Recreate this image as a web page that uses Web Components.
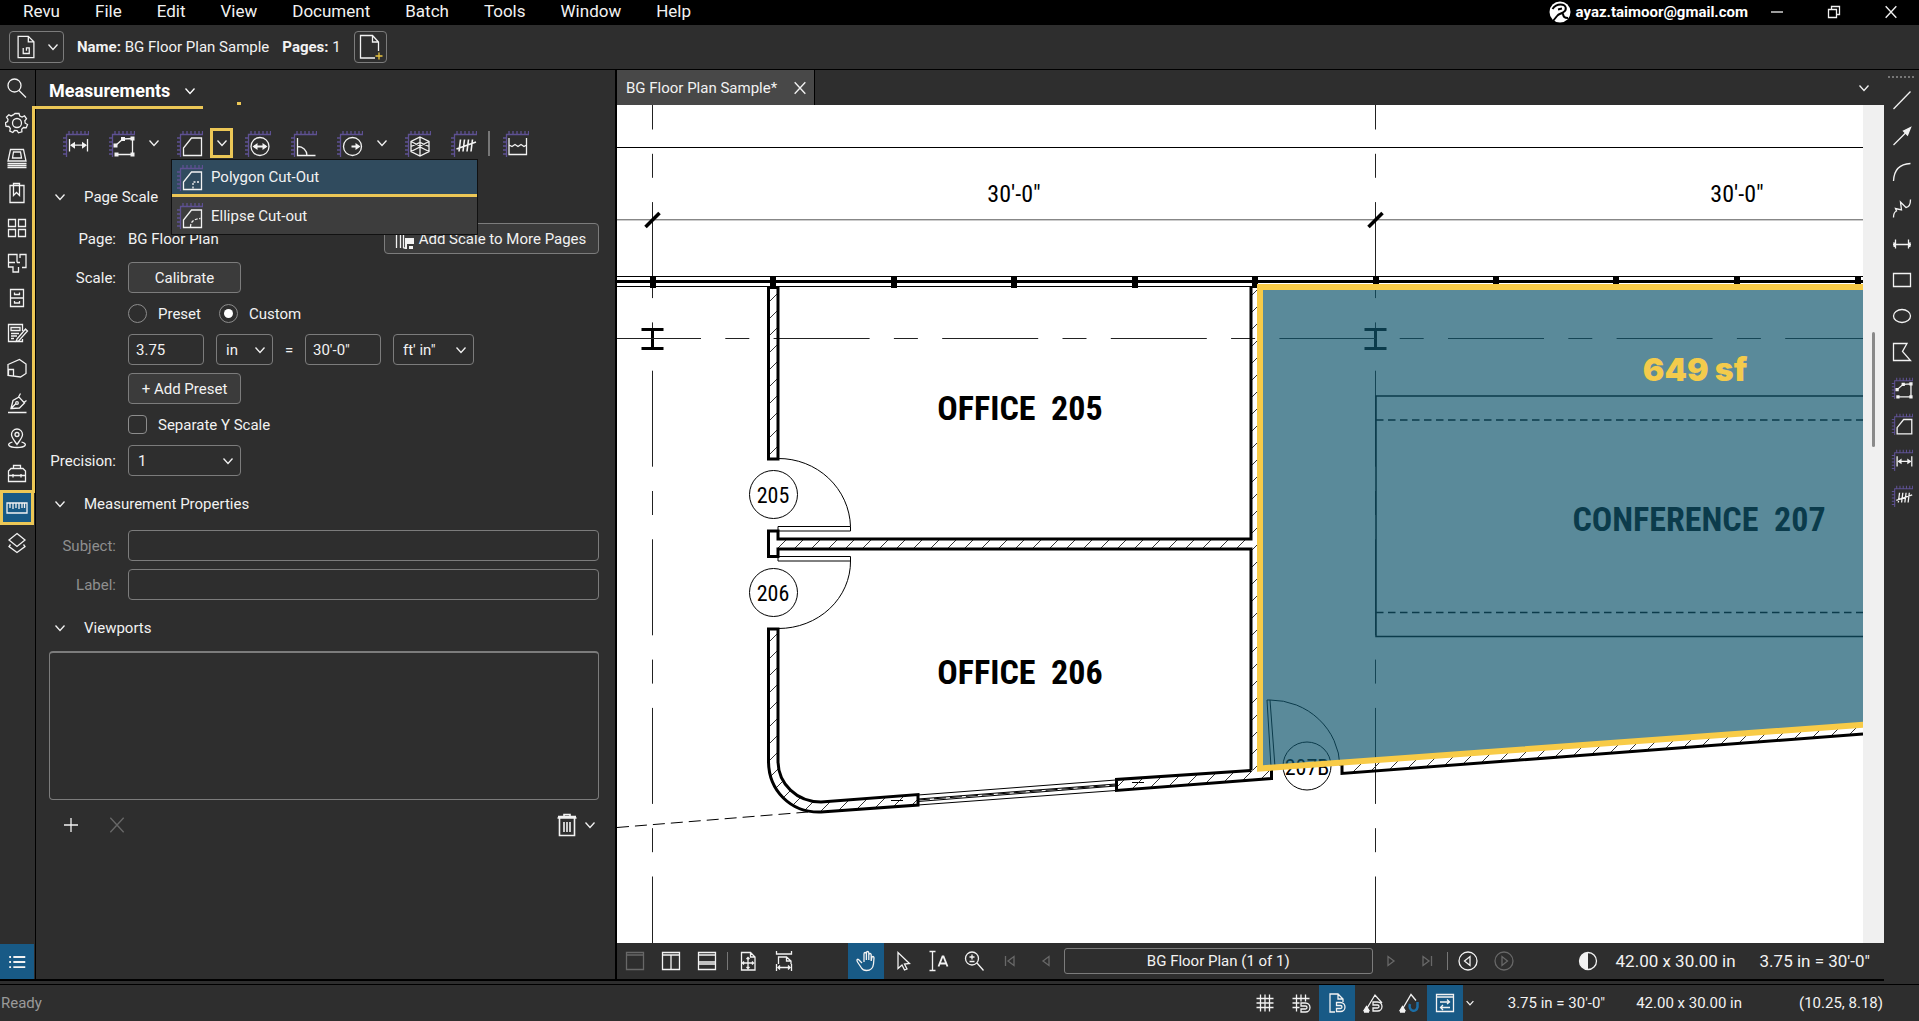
<!DOCTYPE html>
<html lang="en">
<head>
<meta charset="utf-8">
<title>BG Floor Plan Sample</title>
<style>
  html, body {
    height: 100%;
    margin: 0;
  }

  body {
    background: #2e2e2e;
    color: #f2f2f2;
    font: 15px/20px Roboto, "Liberation Sans", sans-serif;
    overflow: hidden;
    --line: #000;
    --edge: #7c7c7c;
    --accent: #185a86;
    --mark: #ecc756;
  }
</style>
</head>
<body>
<plan-app></plan-app>

<script>
const RULER = '<path stroke="#5e5192" stroke-width="1.3" d="M4.5 27V4.5H27M4.5 8H1M4.5 12H1M4.5 16H1M4.5 20H1M4.5 24H1M7 4.5V1M11 4.5V1M15 4.5V1M19 4.5V1M23 4.5V1M26.500 4.500V1"/>';

// name: [viewBox size, markup]
const ICONS = {
  chevron: [16, '<path d="M3.500 5.500L8 10.500L12.500 5.500"/>'],
  search: [24, '<circle cx="9.500" cy="9.500" r="6.500"/><path d="M14 14.500L21 21.500"/>'],
  gear: [24, '<circle cx="12" cy="12" r="4.500"/><path d="M10 2.500h4l.8 2.600 2.300 1 2.400-1.300 2 3-1.700 2 .4 2.400 2.300 1.300-1.300 3.200-2.700-.2-1.800 1.700.2 2.600-3.400 1-1.500-2.200-2.500-.1-1.700 2-3-1.400.5-2.700-1.500-1.900-2.700-.2-.8-3.400 2.300-1.300.4-2.300-1.500-2.200 2.300-2.400 2.300 1.200 2.100-1z"/>'],
  stack: [24, '<path d="M5.500 3.500h13l2.500 11.500H3zM8.500 6h7l1 6h-9zM2.500 17.500h19M2.500 19.500h19M2.500 21.500h19"/>'],
  bookmark: [24, '<path d="M5 4.500h14v17H5zM8.500 2.500h6v12l-3-3-3 3z"/>'],
  tiles: [24, '<path d="M3.500 3.500h7v7h-7zM13.500 3.500h7v7h-7zM3.500 13.500h7v7h-7zM13.500 13.500h7v7h-7z"/>'],
  spaces: [24, '<path d="M12 7.500V3.500H3.500v12.500H8v5h5.500V16M3.500 11.500h6.500M12 7.500v4M12 11.500h3M15 7V3.500h6v13h-4"/>'],
  cabinet: [24, '<path d="M5.500 3.500h13v17h-13zM5.500 12h13M9.500 6.500v2h5v-2M9.500 15v2h5v-2"/>'],
  form: [24, '<path d="M17.500 10V3.500h-14v17h14V18M6 6.500h9v3H6zM6 12.500h8M6 15h6M6 17.500h3M12 18l8.500-10 2 2-8.500 9.500-3 1z"/>'],
  tag: [24, '<path d="M3 8.500L14.500 3.500L21 8v9.500L15.500 21L3 19.500zM3.500 19.500V13.500H8.500V20"/>'],
  pen: [24, '<path d="M3 21.500h18.500M6 17.500l2-8 6-3.500 5.500 6-5 5-8 .5zM6 17.500l5-5M13.500 6l2-3.500M19 11.500l2.500-2"/><circle cx="12" cy="12" r="1.300"/>'],
  pin: [24, '<path d="M12 18.500c-3-4.500-5.500-7-5.500-10a5.500 5.500 0 0 1 11 0c0 3-2.500 5.500-5.500 10z"/><circle cx="12" cy="8.500" r="2"/><path d="M7.500 16c-7 2-4 5.500 4.500 5.500s11.500-3.500 4.500-5.500"/>'],
  toolbox: [24, '<path d="M3.500 14.500V10L6 7.500h12L20.500 10v4.500zM3.500 14.500v6h17v-6M8.500 7.500v-3h7v3M8 13v3.500M16 13v3.500"/>'],
  ruler: [24, '<path d="M2 7h20v10H2zM5 7v5M8 7v6M11 7v5M14 7v6M17 7v5M19.500 7v5"/>'],
  layers: [24, '<path d="M12 2.500L20 9L12 15.500L4 9zM5.500 13.500L4 15.500L12 21.500L20 15.500L18.500 13.500"/>'],
  list: [24, '<path stroke-width="2" d="M3.500 6.500h2M8 6.500h13M3.500 12h2M8 12h13M3.500 17.500h2M8 17.500h13"/>'],

  length: [27, RULER + '<path d="M7.500 9v12.500M25.500 9v12.500M9 15.200h15"/><path fill="currentColor" stroke="none" d="M8 15.200l5-3.500v7zM25 15.200l-5-3.500v7z"/>'],
  area: [27, RULER + '<path d="M7.500 15.500L15 9L24.500 8.500V24.500H8.500"/><path fill="currentColor" stroke="none" d="M5.500 13.500h4v4h-4zM13 7h4v4h-4zM22.500 6.500h4v4h-4zM22.500 22.500h4v4h-4zM6.500 22.500h4v4h-4z"/>'],
  polygon: [27, RULER + '<path d="M7.500 25.500V18L15.500 8H25.500V25.500z"/>'],
  diameter: [27, RULER + '<circle cx="16" cy="16.500" r="9"/><path stroke-width="2" d="M10 16.500h12"/><path fill="currentColor" stroke="none" d="M8.500 16.500l5-3.500v7zM23.500 16.500l-5-3.500v7z"/>'],
  angle: [27, RULER + '<path d="M7.500 8V25.500H25.500M7.500 16.500a9 9 0 0 1 9.500 9"/>'],
  radius: [27, RULER + '<circle cx="16.500" cy="16.500" r="9"/><path stroke-width="2" d="M15.500 16.500h6"/><path fill="currentColor" stroke="none" d="M24.500 16.500l-5-3.500v7z"/>'],
  volume: [27, RULER + '<path d="M16 7l9 4.500v10L16 26l-9-4.500v-10zM7 11.500L16 16l9-4.500M16 7v19M7 16.500l9-4 9 4M7 21.500l9-4.500 9 4.500"/>'],
  count: [27, RULER + '<path stroke-width="1.600" d="M10.500 9.500l-1.500 12M14.500 9.500l-1.500 12M18.500 9.500l-1.500 12M22.500 9.500l-1.500 12M6.500 19L26 12"/>'],
  depth: [27, RULER + '<path d="M7 8V24.500H24.500V8M7 15l3 1.500 3-2 3 2 3-2 3 2 2.500-1.500"/>'],
  cutPolygon: [27, RULER + '<path d="M7.500 25.500V18L15.500 8H25.500V25.500z"/><path stroke-dasharray="2 1.500" d="M17 24.500v-6.500h7"/>'],
  cutEllipse: [27, RULER + '<path d="M7.500 25.500V18L15.500 8H25.500V25.500z"/><path stroke-dasharray="3 1.500" d="M14.500 25c0-5 3-8 10-8.500"/>'],

  pageScale: [22, '<path d="M2.500 3v17M6.500 3v17M9.500 20V3M9.500 20h2"/><path fill="currentColor" stroke="none" d="M11 10h9v6h-7v5h-2zM15 18h4v3h-4z"/>'],
  docMenu: [28, '<path d="M5.500 2.500h11l6 6v17h-17zM16.500 2.500v6h6M11 15v6h6.500v-6h-3v3"/>'],
  newPage: [28, '<path d="M19 25H4.500V2.500h12l6 6.500v9M16.500 2.500V9h6"/><path stroke="#e9c440" d="M23 19.500v7M19.500 23h7"/>'],
  plus: [18, '<path d="M9 2v14M2 9h14"/>'],
  cross: [18, '<path d="M3 2.500l12 13M15 2.500L3 15.500"/>'],
  trash: [26, '<path stroke-width="1.600" d="M3.500 6h19M5.500 6.500v17h15v-17M10 5V2.500h6V5M10 10v10M13 10v10M16 10v10M4 4.500h18"/>'],

  pane1: [22, '<path d="M2.500 2.500h17v17h-17zM2.500 5h17"/>'],
  pane2: [22, '<path d="M2.500 2.500h17v17h-17zM2.500 5h17M11 5v14.500"/>'],
  pane3: [22, '<path d="M2.500 2.500h17v17h-17zM2.500 5h17M2.500 12h17M2.500 14h17"/>'],
  fitPage: [22, '<path d="M4.500 2.500h9l4.500 4.500v13H4.500zM13.500 2.500V7H18M11 7.500v11M5.500 13h11M9.500 9L11 7.500 12.500 9M9.500 17l1.500 1.500 1.500-1.500M7 11.500L5.500 13 7 14.500M15 11.500l1.500 1.500-1.500 1.500"/>'],
  fitWidth: [22, '<path d="M3.500 1v3h15V1M5.500 14V7h8l4.500 4v3M13.500 7v4H18M3.500 14v7M18.500 14v7M5 17.500h12M7 15.500l-2 2 2 2M15 15.500l2 2-2 2"/>'],
  hand: [22, '<path d="M7 13L3.500 9.500C2 8.500 1.500 10.500 2.500 12l4 6c1 1.800 2.500 2.500 5 2.500 4.500 0 6.500-2.500 7-6.500l.5-6c0-2-2-2-2.300 0l-.5 3V5c0-2-2.200-2-2.400 0v5-7c0-2-2.300-2-2.400 0v7-6c0-2-2.400-2-2.400 0v8"/>'],
  pointer: [22, '<path d="M7 2.500v16l4-3.500 2.500 5 2.500-1-2.500-5 5-.5z"/>'],
  textSelect: [22, '<path d="M2.500 1.500h6M5.500 1.500v19M2.500 20.500h6"/><path stroke-width="1.800" d="M11.500 16.500l4-10h1l4 10M13 13.500h6"/>'],
  zoom: [22, '<circle cx="9" cy="8.500" r="6.500"/><path d="M14 13l6.500 7.500M9 4.500v5M6.500 7h5M6.500 11.500h5"/>'],
  first: [22, '<path d="M6.500 6v10M15 6.500v9L9 11z"/>'],
  prev: [22, '<path d="M14 6.500v9L8 11z"/>'],
  next: [22, '<path d="M8 6.500v9l6-4.500z"/>'],
  last: [22, '<path d="M15.500 6v10M7 6.500v9l6-4.500z"/>'],
  back: [22, '<circle cx="11" cy="11" r="9"/><path d="M13 6.500v9L7.500 11z"/>'],
  forward: [22, '<circle cx="11" cy="11" r="9"/><path d="M9 6.500v9l5.500-4.500z"/>'],
  contrast: [22, '<circle cx="11" cy="11" r="8.500"/><path fill="currentColor" stroke="none" d="M11 2.500a8.500 8.500 0 0 0 0 17z"/>'],

  grid: [22, '<path d="M6.500 2.500v17M11 2.500v17M15.500 2.500v17M2.500 6.500h17M2.500 11h17M2.500 15.500h17"/>'],
  snapGrid: [22, '<path d="M6.500 2.500v17M11 2.500v7M15.500 2.500v7M2.500 6.500h17M2.500 11h7M2.500 15.500h7M11 11h4.500a4.500 4.500 0 0 1 0 9H11v-3h4.500a1.500 1.500 0 0 0 0-3H11z"/>'],
  snapDoc: [22, '<path d="M9 20H4V2h8l5 5v3M12 2v5h5M10.500 10.500h4a4.500 4.500 0 0 1 0 9h-4v-3h4a1.500 1.500 0 0 0 0-3h-4z"/>'],
  snapMark: [22, '<path d="M4.500 17L13 3l7 8M11 10h4.500a4.500 4.500 0 0 1 0 9H11v-3h4.500a1.500 1.500 0 0 0 0-3H11z"/><path fill="currentColor" d="M4.500 14.500l2.500 4H2zM2 20h5"/>'],
  reuse: [22, '<path d="M4.500 17L13 2.500l5 6"/><path fill="currentColor" d="M4.500 14.500l2.500 4H2zM2 20h5"/><path stroke="#1c6ea6" stroke-width="2.500" d="M12 12c-2.500 7 6.500 9.500 7.500 3V10"/>'],
  sync: [22, '<path d="M2.500 2.500h17v17h-17zM2.500 5h17M6 10h9.500M13 7.500l2.500 2.500L13 12M16 15.500H6.500M9 13l-2.500 2.500L9 18"/>'],

  line: [22, '<path d="M2.500 20L19.500 2.500"/>'],
  arrow: [22, '<path d="M2.500 20L16 6.500"/><path fill="currentColor" d="M12.500 6L19.500 2.500L16.500 10z"/>'],
  arc: [22, '<path d="M2.500 20C3 8 9 3 19.500 2.500"/>'],
  squiggle: [22, '<path d="M2.500 20.500c0-4 .5-5.500 3-6.500l-1-2.500 6 1.500-1-8 5.500 5.500c3.500-.5 4.500-3.500 4.500-8"/>'],
  dimension: [22, '<path d="M4.500 6.500v9M17.500 6.500v9M2 11.500h18M2.500 9.500l2 2-2 2M19.500 9.500l-2 2 2 2"/>'],
  square: [22, '<path d="M2.500 4.500h17v13h-17z"/>'],
  ellipse: [22, '<ellipse cx="11" cy="11" rx="8.500" ry="6.500"/>'],
  flag: [22, '<path d="M2.500 2.500H16L11.500 10.500L19.500 19.500H2.500z"/>'],

  minimize: [18, '<path d="M3 9h12"/>'],
  restore: [18, '<path d="M3.500 6.500h8v8h-8zM6.500 6.500v-3h8v8h-3"/>'],
  logo: [24, '<circle cx="12" cy="12" r="10.500" fill="#fff" stroke="none"/><path stroke="#000" stroke-width="2" d="M4.500 9c2-3 4.500-4.500 8-4.500 6 0 7 5.500 2.500 8-2.500 1.300-4.500 1.500-6 3.500l-4 5M15 13.500c0 3 2 4.500 5 4.500M10 9.500l4-1"/>'],
};

class UiIcon extends HTMLElement {
  connectedCallback() {
    const [box, body] = ICONS[this.getAttribute('name')];
    const size = this.getAttribute('size') || box;
    this.attachShadow({ mode: 'open' });
    this.shadowRoot.innerHTML = `
      <style>
        :host {
          display: inline-flex;
          flex: none;
        }
        svg {
          display: block;
          fill: none;
          stroke: currentColor;
          stroke-width: ${(1.3 * box / size).toFixed(1)};
        }
      </style>
      <svg width="${size}" height="${size}" viewBox="0 0 ${box} ${box}" aria-hidden="true">${body}</svg>
    `;
  }
}

customElements.define('ui-icon', UiIcon);

// Flat icon button used in every bar
class IconButton extends HTMLElement {
  connectedCallback() {
    const name = this.getAttribute('icon');
    const size = this.getAttribute('size') || 22;
    const label = this.getAttribute('label') || name;
    this.attachShadow({ mode: 'open' });
    this.shadowRoot.innerHTML = `
      <style>
        :host {
          display: flex;
          flex: none;
        }
        button {
          display: flex;
          align-items: center;
          justify-content: center;
          width: 100%;
          margin: 0;
          padding: 0;
          border: 0;
          background: none;
          color: inherit;
        }
        :host([active]) button {
          background: var(--accent);
        }
        :host([dim]) button {
          color: #686868;
        }
        :host([marked]) button {
          border: 3px solid var(--mark);
        }
      </style>
      <button aria-label="${label}"><ui-icon name="${name}" size="${size}"></ui-icon></button>
    `;
  }
}

customElements.define('icon-button', IconButton);

class TitleBar extends HTMLElement {
  connectedCallback() {
    const menus = ['Revu', 'File', 'Edit', 'View', 'Document', 'Batch', 'Tools', 'Window', 'Help'];
    this.attachShadow({ mode: 'open' });
    this.shadowRoot.innerHTML = `
      <style>
        :host {
          display: flex;
          align-items: stretch;
          box-sizing: border-box;
          height: 25px;
          padding: 0 0 2px 6px;
          background: #000;
        }
        nav {
          display: flex;
          flex: 1;
        }
        nav button {
          padding: 0 18px 0 17px;
          border: 0;
          background: none;
          color: inherit;
          font: 17px/23px Roboto, sans-serif;
        }
        .account {
          display: flex;
          align-items: center;
          gap: 4px;
          font-weight: 700;
          color: #fff;
        }
        icon-button {
          width: 57px;
        }
      </style>
      <nav>${menus.map(m => `<button>${m}</button>`).join('')}</nav>
      <div class="account"><ui-icon name="logo"></ui-icon>ayaz.taimoor@gmail.com</div>
      <icon-button icon="minimize" size="18" label="Minimize"></icon-button>
      <icon-button icon="restore" size="18" label="Restore"></icon-button>
      <icon-button icon="cross" size="16" label="Close"></icon-button>
    `;
  }
}

customElements.define('title-bar', TitleBar);

class InfoBar extends HTMLElement {
  connectedCallback() {
    this.attachShadow({ mode: 'open' });
    this.shadowRoot.innerHTML = `
      <style>
        :host {
          display: flex;
          align-items: center;
          height: 44px;
          padding-left: 9px;
          border-bottom: 1px solid var(--line);
        }
        button {
          display: flex;
          align-items: center;
          justify-content: center;
          gap: 8px;
          box-sizing: border-box;
          height: 32px;
          padding: 0;
          border: 1px solid var(--edge);
          border-radius: 4px;
          background: none;
          color: inherit;
        }
        .doc {
          gap: 6px;
          width: 55px;
          margin-right: 13px;
        }
        .new {
          width: 33px;
        }
        span {
          margin-right: 13px;
        }
      </style>
      <button class="doc" aria-label="Document"><ui-icon name="docMenu" size="26"></ui-icon><ui-icon name="chevron"></ui-icon></button>
      <span><b>Name:</b> BG Floor Plan Sample</span>
      <span><b>Pages:</b> 1</span>
      <button class="new" aria-label="New page"><ui-icon name="newPage"></ui-icon></button>
    `;
  }
}

customElements.define('info-bar', InfoBar);

class SideRail extends HTMLElement {
  connectedCallback() {
    const tools = ['search', 'gear', 'stack', 'bookmark', 'tiles', 'spaces', 'cabinet', 'form', 'tag', 'pen', 'pin', 'toolbox', 'ruler', 'layers'];
    this.attachShadow({ mode: 'open' });
    this.shadowRoot.innerHTML = `
      <style>
        :host {
          display: flex;
          flex-direction: column;
          width: 34px;
          padding-right: 1px;
          border-right: 1px solid var(--line);
        }
        icon-button {
          height: 35px;
        }
        .list {
          margin-top: auto;
        }
      </style>
      ${tools.map(t => `<icon-button icon="${t}" size="24" ${t === 'ruler' ? 'active marked' : ''}></icon-button>`).join('')}
      <icon-button class="list" icon="list" active></icon-button>
    `;
  }
}

customElements.define('side-rail', SideRail);

class PanelSection extends HTMLElement {
  connectedCallback() {
    this.attachShadow({ mode: 'open' });
    this.shadowRoot.innerHTML = `
      <style>
        :host {
          display: block;
        }
        button {
          display: flex;
          align-items: center;
          gap: 16px;
          height: 24px;
          margin: 16px 0 14px 3px;
          padding: 0;
          border: 0;
          background: none;
          color: inherit;
          font: inherit;
        }
        :host([tight]) button {
          margin-bottom: 11px;
        }
        div {
          display: flex;
          flex-direction: column;
          gap: 8px;
        }
      </style>
      <button><ui-icon name="chevron"></ui-icon>${this.getAttribute('heading')}</button>
      <div><slot></slot></div>
    `;
  }
}

customElements.define('panel-section', PanelSection);

class CutoutMenu extends HTMLElement {
  connectedCallback() {
    this.attachShadow({ mode: 'open' });
    this.shadowRoot.innerHTML = `
      <style>
        :host {
          display: block;
          width: 305px;
          border: 1px solid #111;
          background: #3d3d3d;
        }
        button {
          display: flex;
          align-items: center;
          gap: 8px;
          width: 100%;
          height: 37px;
          padding: 0 0 0 4px;
          border: 0;
          background: none;
          color: inherit;
          font: inherit;
        }
        .on {
          border-bottom: 3px solid var(--mark);
          background: #304b5e;
        }
      </style>
      <button class="on"><ui-icon name="cutPolygon"></ui-icon>Polygon Cut-Out</button>
      <button><ui-icon name="cutEllipse"></ui-icon>Ellipse Cut-out</button>
    `;
  }
}

customElements.define('cutout-menu', CutoutMenu);

class MeasureTools extends HTMLElement {
  connectedCallback() {
    this.attachShadow({ mode: 'open' });
    this.shadowRoot.innerHTML = `
      <style>
        :host {
          display: flex;
          align-items: center;
          gap: 19px;
          height: 30px;
          padding-left: 26px;
        }
        .split {
          position: relative;
          display: flex;
          align-items: center;
          gap: 7px;
          margin-right: -8px;
        }
        .split icon-button + icon-button {
          width: 23px;
          height: 30px;
        }
        cutout-menu {
          position: absolute;
          top: 31px;
          left: -5px;
          z-index: 2;
        }
        hr {
          width: 1px;
          height: 25px;
          margin: 0 -8px;
          border: 0;
          border-left: 2px solid #777;
        }
      </style>
      <icon-button icon="length" size="27"></icon-button>
      <div class="split">
        <icon-button icon="area" size="27"></icon-button>
        <icon-button icon="chevron" size="16"></icon-button>
      </div>
      <div class="split">
        <icon-button icon="polygon" size="27"></icon-button>
        <icon-button icon="chevron" size="16" marked></icon-button>
        <cutout-menu></cutout-menu>
      </div>
      <icon-button icon="diameter" size="27"></icon-button>
      <icon-button icon="angle" size="27"></icon-button>
      <div class="split">
        <icon-button icon="radius" size="27"></icon-button>
        <icon-button icon="chevron" size="16"></icon-button>
      </div>
      <icon-button icon="volume" size="27"></icon-button>
      <icon-button icon="count" size="27"></icon-button>
      <hr>
      <icon-button icon="depth" size="27"></icon-button>
    `;
  }
}

customElements.define('measure-tools', MeasureTools);

class MeasurePanel extends HTMLElement {
  connectedCallback() {
    this.attachShadow({ mode: 'open' });
    this.shadowRoot.innerHTML = `
      <style>
        :host {
          display: flex;
          flex-direction: column;
          box-sizing: border-box;
          width: 581px;
          padding: 0 16px 0 13px;
          border-right: 2px solid var(--line);
        }
        header {
          display: flex;
          align-items: center;
          gap: 12px;
          height: 41px;
          font-size: 18px;
          font-weight: 700;
          color: #fff;
        }
        measure-tools {
          margin: 17px 0 11px -13px;
        }
        .row {
          display: flex;
          align-items: center;
          min-height: 31px;
        }
        .low {
          min-height: 25px;
        }
        .name {
          flex: none;
          width: 67px;
          margin-right: 12px;
          text-align: right;
        }
        .muted {
          color: #8f8f8f;
        }
        .push {
          margin-left: auto;
        }
        button, input, select {
          box-sizing: border-box;
          height: 31px;
          margin: 0;
          border: 1px solid var(--edge);
          border-radius: 4px;
          background: none;
          color: inherit;
          font: inherit;
        }
        button {
          display: flex;
          align-items: center;
          justify-content: center;
          gap: 3px;
          background: #3b3b3b;
        }
        .wide {
          width: 113px;
        }
        .pages {
          width: 215px;
          padding: 0 3px 0 0;
        }
        .num {
          width: 76px;
          padding: 0 7px;
        }
        .fill {
          flex: 1;
          min-width: 0;
        }
        .pick {
          display: grid;
          align-items: center;
          margin-left: 12px;
        }
        .pick.first {
          margin-left: 0;
        }
        .pick > * {
          grid-area: 1 / 1;
        }
        .pick select {
          appearance: none;
          width: 100%;
          padding: 0 9px;
        }
        .pick ui-icon {
          justify-self: end;
          margin-right: 5px;
          pointer-events: none;
        }
        .in {
          width: 57px;
        }
        .ft {
          width: 81px;
        }
        .eq {
          width: 32px;
          text-align: center;
        }
        input[type=radio], input[type=checkbox] {
          appearance: none;
          display: grid;
          place-items: center;
          width: 19px;
          height: 19px;
          margin-right: 11px;
          border-color: #8c8c8c;
        }
        input[type=radio] {
          border-radius: 50%;
        }
        input[type=radio]:checked::after {
          content: "";
          width: 9px;
          height: 9px;
          border-radius: 50%;
          background: #fff;
        }
        label + input[type=radio] {
          margin-left: 18px;
        }
        .list {
          height: 149px;
          box-sizing: border-box;
          border: 1px solid var(--edge);
          border-top-width: 2px;
          border-radius: 4px;
        }
        .actions {
          display: flex;
          align-items: center;
          gap: 18px;
          padding-left: 8px;
          height: 33px;
        }
        .actions icon-button {
          width: 28px;
        }
        .actions .del {
          margin-left: auto;
          margin-right: -18px;
        }
        .actions .more {
          width: 18px;
        }
      </style>
      <header>Measurements <ui-icon name="chevron"></ui-icon></header>
      <measure-tools></measure-tools>
      <panel-section heading="Page Scale">
        <div class="row"><span class="name">Page:</span>BG Floor Plan<button class="pages push"><ui-icon name="pageScale"></ui-icon>Add Scale to More Pages</button></div>
        <div class="row"><span class="name">Scale:</span><button class="wide">Calibrate</button></div>
        <div class="row low">
          <span class="name"></span>
          <input type="radio" name="kind" id="preset"><label for="preset">Preset</label>
          <input type="radio" name="kind" id="custom" checked><label for="custom">Custom</label>
        </div>
        <div class="row">
          <span class="name"></span>
          <input class="num" value="3.75" aria-label="Page distance">
          <span class="pick in"><select aria-label="Page unit"><option>in</option></select><ui-icon name="chevron"></ui-icon></span>
          <span class="eq">=</span>
          <input class="num" value="30'-0&quot;" aria-label="Real distance">
          <span class="pick ft"><select aria-label="Real unit"><option>ft' in"</option></select><ui-icon name="chevron"></ui-icon></span>
        </div>
        <div class="row"><span class="name"></span><button class="wide">+ Add Preset</button></div>
        <div class="row low"><span class="name"></span><input type="checkbox" id="sep"><label for="sep">Separate Y Scale</label></div>
        <div class="row">
          <label class="name" for="prec">Precision:</label>
          <span class="pick first wide"><select id="prec"><option>1</option></select><ui-icon name="chevron"></ui-icon></span>
        </div>
      </panel-section>
      <panel-section heading="Measurement Properties">
        <div class="row"><label class="name muted" for="subject">Subject:</label><input class="fill" id="subject"></div>
        <div class="row"><label class="name muted" for="label">Label:</label><input class="fill" id="label"></div>
      </panel-section>
      <panel-section heading="Viewports" tight>
        <div class="list"></div>
        <div class="actions">
          <icon-button icon="plus" size="18" label="Add"></icon-button>
          <icon-button icon="cross" size="20" label="Remove" dim></icon-button>
          <icon-button class="del" icon="trash" size="26" label="Delete"></icon-button>
          <icon-button class="more" icon="chevron" size="16" label="More"></icon-button>
        </div>
      </panel-section>
    `;
  }
}

customElements.define('measure-panel', MeasurePanel);

class DocTabs extends HTMLElement {
  connectedCallback() {
    this.attachShadow({ mode: 'open' });
    this.shadowRoot.innerHTML = `
      <style>
        :host {
          display: flex;
          justify-content: space-between;
          height: 35px;
        }
        .tab {
          display: flex;
          align-items: center;
          gap: 9px;
          padding-left: 9px;
          border-right: 1px solid var(--line);
          background: #484848;
        }
        icon-button {
          width: 28px;
          height: 28px;
        }
        .more {
          width: 40px;
          height: 35px;
        }
      </style>
      <div class="tab">BG Floor Plan Sample*<icon-button icon="cross" size="16" label="Close tab"></icon-button></div>
      <icon-button class="more" icon="chevron" size="16" label="Tabs"></icon-button>
    `;
  }
}

customElements.define('doc-tabs', DocTabs);

class FloorPlan extends HTMLElement {
  connectedCallback() {
    // window mullions and column grid repeat on fixed spacings
    const mullions = [653, 773, 894, 1014, 1135, 1255, 1376, 1496, 1616, 1737, 1858];
    const columns = [652.5, 1375.5];
    this.attachShadow({ mode: 'open' });
    this.shadowRoot.innerHTML = `
      <style>
        :host {
          display: flex;
          min-height: 0;
          background: #fff;
        }
        svg {
          flex: 1;
          min-width: 0;
          height: 100%;
          fill: none;
          stroke: #000;
        }
        .axis {
          stroke: #222;
          stroke-dasharray: 96 24.300 24 24.300;
        }
        .wall {
          stroke-width: 3;
        }
        text {
          fill: #000;
          stroke: none;
          text-anchor: middle;
          white-space: pre;
          font-family: "Liberation Sans Narrow", "Roboto Condensed", "Liberation Sans", sans-serif;
        }
        .dim {
          font-size: 24px;
        }
        .room {
          font-size: 34px;
          font-weight: 700;
        }
        .door {
          font-size: 22px;
        }
        .value {
          fill: #f3cb4c;
          font: 900 32px Inter, "Liberation Sans", sans-serif;
        }
        .scroll {
          width: 21px;
          background: #f0f0f0;
        }
        .thumb {
          width: 3px;
          height: 115px;
          margin: 227px 0 0 9px;
          border-radius: 2px;
          background: #8a8a8a;
        }
      </style>
      <svg viewBox="617 105 1246 838" preserveAspectRatio="xMinYMin slice">
        <defs>
          <pattern id="hatch" width="17" height="17" patternUnits="userSpaceOnUse">
            <path stroke="#333" d="M-2 19L19 -2"/>
          </pattern>
        </defs>

        <path d="M617 147.500H1863"/>
        <path stroke="#555" d="M617 219.800H1863"/>
        ${columns.map(x => `
          <path class="axis" d="M${x} 33.500V950"/>
          <path stroke-width="3.500" d="M${x - 7} 227L${x + 7} 213"/>
          <path stroke-width="3" d="M${x - 11} 329.500h22M${x - 11} 348.500h22M${x} 329v19"/>
        `).join('')}
        <path class="axis" d="M605 338.500H1863"/>

        <path d="M617 276.500H1863M617 286.500H1863"/>
        <path stroke-width="3" d="M617 281.500H1863"/>
        ${mullions.map(x => `<path stroke-width="6" d="M${x} 276v12"/>`).join('')}

        <path class="wall" fill="url(#hatch)" d="M768.500 287.500h9.500v171.500h-9.500z"/>
        <path fill="url(#hatch)" stroke="none" d="M1251 287h9v483h-9zM768.500 539H1251v10H768.500z"/>
        <path class="wall" d="M1251 286V539H778V531H768.500V556.500H778V549H1251V770.500"/>
        <path d="M778 526.500h72.500v4.500h-72.500zM778 556.500h72.500v4.500h-72.500zM778 458.500a72 70 0 0 1 72.500 68M850.500 561a72 67 0 0 1-72 67.500"/>
        <circle cx="773.500" cy="494.500" r="24"/>
        <circle cx="773.500" cy="592.500" r="24"/>

        <path class="wall" fill="url(#hatch)" d="M768.500 629H778V761C778 784 797 802 821 802L918 794.500V805L821 812C790 813 768.500 790 768.500 761z"/>
        <path d="M918 795L1116 780M918 805L1116 790.500M918 799L1116 784M918 801.500L1116 786M891 800.500h12M1132 782.500h12"/>
        <path stroke-dasharray="12 4" d="M918 800L1116 785"/>
        <path fill="url(#hatch)" stroke="none" d="M1117 779.500L1251 770.500H1271V778L1117 790z"/>
        <path class="wall" d="M1251 770.500L1116.500 779.500V790.500L1271.500 778.500V768"/>
        <path stroke-dasharray="12 6" d="M617 827.500L808 812"/>

        <path fill="url(#hatch)" stroke="none" d="M1342 762L1863 725V734L1342 773z"/>
        <path class="wall" d="M1342 762V773.500L1863 734"/>
        <circle cx="1307" cy="766" r="24"/>
        <path d="M1267 700h3l5 67h-4zM1270 700a70 68 0 0 1 70 66"/>
        <path stroke-width="1.500" d="M1863 396H1376V636.500H1863"/>
        <path stroke-width="1.500" stroke-dasharray="7.500 4.500" d="M1376 420H1863M1376 612.500H1863"/>

        <text class="dim" x="1014" y="202">30'-0"</text>
        <text class="dim" x="1737" y="202">30'-0"</text>
        <text class="room" x="1020" y="420">OFFICE  205</text>
        <text class="room" x="1020" y="684">OFFICE  206</text>
        <text class="room" x="1699" y="531">CONFERENCE  207</text>
        <text class="door" x="773" y="503">205</text>
        <text class="door" x="773" y="601">206</text>
        <text class="door" x="1307" y="775">207B</text>

        <path fill="#10566d" fill-opacity=".69" stroke="none" d="M1260 287H1880V724L1260 768.500z"/>
        <path stroke="#f8cb47" stroke-width="6" d="M1880 287H1260V768.500L1880 723.500"/>
        <text class="value" x="1695" y="381">649 sf</text>
      </svg>
      <div class="scroll"><div class="thumb"></div></div>
    `;
  }
}

customElements.define('floor-plan', FloorPlan);

class ViewBar extends HTMLElement {
  connectedCallback() {
    this.attachShadow({ mode: 'open' });
    this.shadowRoot.innerHTML = `
      <style>
        :host {
          display: flex;
          height: 36px;
          border-bottom: 2px solid var(--line);
        }
        icon-button {
          width: 36px;
        }
        hr {
          width: 1px;
          height: 18px;
          margin: auto 2px;
          border: 0;
          background: #777;
        }
        .hand {
          margin-left: 46px;
        }
        .contrast {
          margin-left: 48px;
        }
        input {
          flex: 1;
          min-width: 80px;
          box-sizing: border-box;
          height: 26px;
          margin: 5px 0;
          border: 1px solid var(--edge);
          border-radius: 3px;
          background: none;
          color: inherit;
          font: inherit;
          text-align: center;
        }
        span {
          align-self: center;
          margin: 0 14px 0 10px;
          font-size: 17px;
        }
      </style>
      <icon-button icon="pane1" dim></icon-button>
      <icon-button icon="pane2"></icon-button>
      <icon-button icon="pane3"></icon-button>
      <hr>
      <icon-button icon="fitPage"></icon-button>
      <icon-button icon="fitWidth"></icon-button>
      <icon-button class="hand" icon="hand" active></icon-button>
      <icon-button icon="pointer"></icon-button>
      <icon-button icon="textSelect"></icon-button>
      <icon-button icon="zoom"></icon-button>
      <icon-button icon="first" dim></icon-button>
      <icon-button icon="prev" dim></icon-button>
      <input value="BG Floor Plan (1 of 1)" aria-label="Page">
      <icon-button icon="next" dim></icon-button>
      <icon-button icon="last" dim></icon-button>
      <hr>
      <icon-button icon="back"></icon-button>
      <icon-button icon="forward" dim></icon-button>
      <icon-button class="contrast" icon="contrast"></icon-button>
      <span>42.00 x 30.00 in</span>
      <span>3.75 in = 30'-0"</span>
    `;
  }
}

customElements.define('view-bar', ViewBar);

class MarkupRail extends HTMLElement {
  connectedCallback() {
    const tools = ['line', 'arrow', 'arc', 'squiggle', 'dimension', 'square', 'ellipse', 'flag', 'area', 'polygon', 'length', 'count'];
    this.attachShadow({ mode: 'open' });
    this.shadowRoot.innerHTML = `
      <style>
        :host {
          display: flex;
          flex-direction: column;
          width: 35px;
        }
        .grip {
          height: 2px;
          margin: 6px 4px 4px;
          background: repeating-linear-gradient(90deg, #777 0 2px, transparent 2px 4px);
        }
        icon-button {
          height: 36px;
        }
      </style>
      <div class="grip"></div>
      ${tools.map(t => `<icon-button icon="${t}"></icon-button>`).join('')}
    `;
  }
}

customElements.define('markup-rail', MarkupRail);

class StatusBar extends HTMLElement {
  connectedCallback() {
    this.attachShadow({ mode: 'open' });
    this.shadowRoot.innerHTML = `
      <style>
        :host {
          display: flex;
          height: 36px;
          margin-top: 3px;
          padding: 0 36px 0 1px;
          border-top: 1px solid var(--line);
        }
        span {
          align-self: center;
          margin-left: 31px;
        }
        .ready {
          margin: 0 auto 0 0;
          color: #9a9a9a;
        }
        .pos {
          margin-left: 57px;
        }
        icon-button {
          width: 36px;
        }
        .more {
          width: 14px;
        }
      </style>
      <span class="ready">Ready</span>
      <icon-button icon="grid"></icon-button>
      <icon-button icon="snapGrid"></icon-button>
      <icon-button icon="snapDoc" active></icon-button>
      <icon-button icon="snapMark"></icon-button>
      <icon-button icon="reuse"></icon-button>
      <icon-button icon="sync" active></icon-button>
      <icon-button class="more" icon="chevron" size="12"></icon-button>
      <span>3.75 in = 30'-0"</span>
      <span>42.00 x 30.00 in</span>
      <span class="pos">(10.25, 8.18)</span>
    `;
  }
}

customElements.define('status-bar', StatusBar);

class PlanApp extends HTMLElement {
  connectedCallback() {
    this.attachShadow({ mode: 'open' });
    this.shadowRoot.innerHTML = `
      <style>
        :host {
          display: flex;
          flex-direction: column;
          height: 100vh;
        }
        main {
          position: relative;
          display: flex;
          flex: 1;
          min-height: 0;
        }
        .left {
          display: flex;
          border-bottom: 2px solid var(--line);
        }
        .doc {
          display: flex;
          flex: 1;
          flex-direction: column;
          min-width: 0;
        }
        floor-plan {
          flex: 1;
        }
        /* highlight drawn over the rail and the panel title */
        .trail {
          position: absolute;
          top: 36px;
          left: 32px;
          width: 168px;
          height: 384px;
          border-top: 3px solid var(--mark);
          border-left: 3px solid var(--mark);
          pointer-events: none;
          clip-path: polygon(0 0, 100% 0, 100% 3px, 3px 3px, 3px 100%, 0 100%);
        }
        .dot {
          position: absolute;
          top: 32px;
          left: 237px;
          width: 4px;
          height: 3px;
          background: var(--mark);
        }
      </style>
      <title-bar></title-bar>
      <info-bar></info-bar>
      <main>
        <div class="left">
          <side-rail></side-rail>
          <measure-panel></measure-panel>
        </div>
        <div class="doc">
          <doc-tabs></doc-tabs>
          <floor-plan></floor-plan>
          <view-bar></view-bar>
        </div>
        <markup-rail></markup-rail>
        <div class="trail"></div>
        <div class="dot"></div>
      </main>
      <status-bar></status-bar>
    `;
  }
}

customElements.define('plan-app', PlanApp);
</script>
</body>
</html>
